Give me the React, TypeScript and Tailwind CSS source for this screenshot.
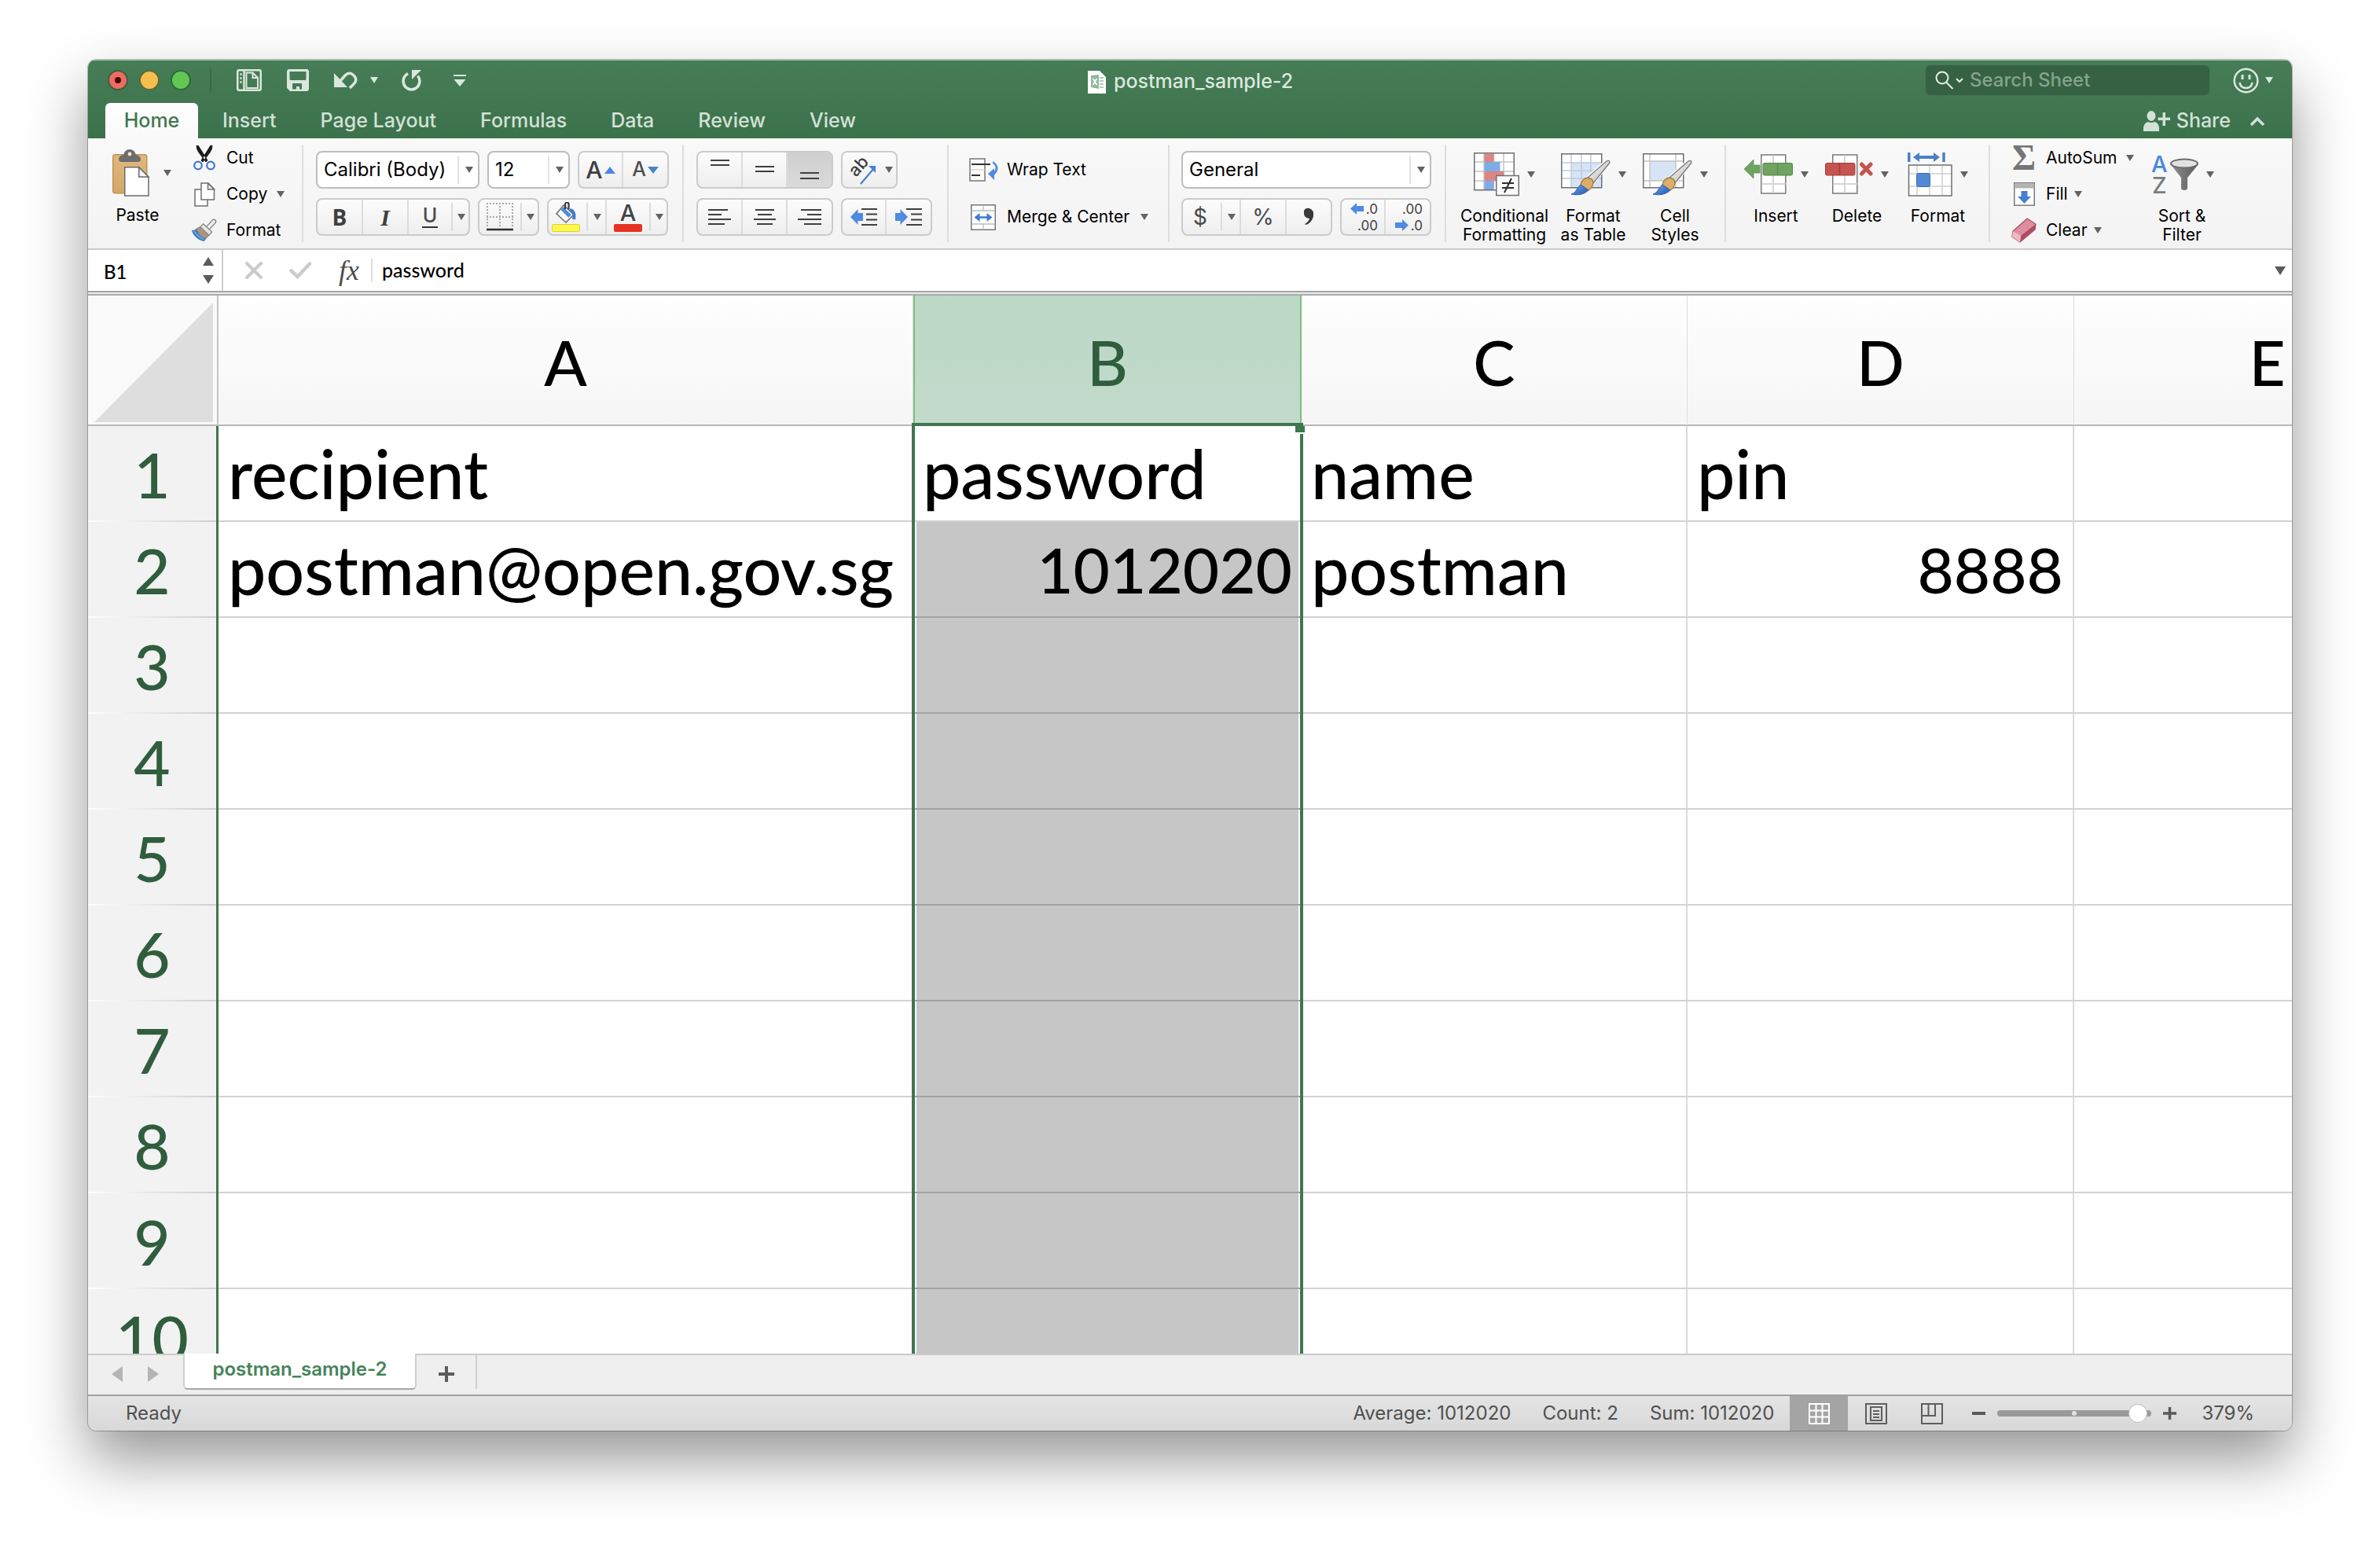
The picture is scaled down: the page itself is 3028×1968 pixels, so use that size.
import React, { ReactNode } from "react";

const BUTTON_FACE = "bg-linear-to-b from-[#fcfcfc] to-[#eeeeee] border-2 border-[#cbcbcb] rounded-lg";

function Caret({ className = "text-[#636363]" }: { className?: string }) {
  return (
    <svg viewBox="0 0 10 8" className={`h-2 w-2.5 shrink-0 ${className}`} aria-hidden="true">
      <path d="M0 0h10L5 8z" fill="currentColor" />
    </svg>
  );
}

function Separator() {
  return <div className="my-2 w-0.5 shrink-0 bg-[#dedede]" />;
}

function CaretButton({ label, className = "w-6" }: { label: string; className?: string }) {
  return (
    <button aria-label={label} className={`relative flex h-full shrink-0 items-center justify-center pl-1 ${className}`}>
      <span className="absolute inset-y-1 left-0 w-0.5 bg-[#dcdcdc]" />
      <Caret />
    </button>
  );
}

function ButtonSet({ children, className = "" }: { children: ReactNode; className?: string }) {
  return <div className={`flex h-12 shrink-0 overflow-hidden ${BUTTON_FACE} ${className}`}>{children}</div>;
}

function SetButton({ label, className, children }: { label: string; className: string; children: ReactNode }) {
  return (
    <button aria-label={label} className={`flex h-full shrink-0 items-center justify-center ${className}`}>
      {children}
    </button>
  );
}

function Picker({ label, value, className }: { label: string; value: string; className: string }) {
  return (
    <div className={`relative h-12 shrink-0 rounded-lg border-2 border-[#bdbdbd] bg-white ${className}`}>
      <select aria-label={label} className="h-full w-full appearance-none bg-transparent pl-2 text-2xl text-black">
        <option>{value}</option>
      </select>
      <span className="pointer-events-none absolute inset-y-1 right-6 w-0.5 bg-[#e3e3e3]" />
      <span className="pointer-events-none absolute inset-y-0 right-1.5 flex items-center">
        <Caret />
      </span>
    </div>
  );
}

function BigButton({ icon, label, className }: { icon: ReactNode; label: ReactNode; className: string }) {
  return (
    <button className={`flex shrink-0 flex-col items-center pt-4 ${className}`}>
      <span className="flex h-[60px] items-center gap-2.5">
        {icon}
        <Caret />
      </span>
      <span className="mt-[11px] text-center text-[21px] leading-6">{label}</span>
    </button>
  );
}

function RowButton({ icon, label, caret, gap = "gap-3" }: { icon: ReactNode; label: string; caret?: boolean; gap?: string }) {
  return (
    <button className={`flex h-[46px] items-center text-[21px] ${gap}`}>
      <span className="flex items-center gap-3">
        <span className="flex w-8 justify-center">{icon}</span>
        {label}
      </span>
      {caret && <Caret />}
    </button>
  );
}

/* ---------- icons ---------- */

function PasteIcon() {
  return (
    <svg width="47" height="60" viewBox="0 0 47 60" aria-hidden="true">
      <defs>
        <linearGradient id="board" x1="0" y1="0" x2="0" y2="1">
          <stop offset="0" stopColor="#e0b982" />
          <stop offset="1" stopColor="#d3a765" />
        </linearGradient>
      </defs>
      <rect x="0.75" y="6.75" width="43" height="49" rx="3" fill="url(#board)" stroke="#c2934f" strokeWidth="1.5" />
      <path d="M8 13q0-5 6-6 2-7 8-7t8 7q6 1 6 6 0 3-4 3H12q-4 0-4-3z" fill="#6d6d6d" />
      <circle cx="22" cy="6" r="2.4" fill="#f3e6d2" />
      <path d="M15.75 22.75h18L46 35v24H15.75z" fill="#fff" stroke="#6a6a6a" strokeWidth="1.5" />
      <path d="M33.75 22.75V35H46z" fill="#f4f4f4" stroke="#6a6a6a" strokeWidth="1.5" />
    </svg>
  );
}

function CutIcon() {
  return (
    <svg width="28" height="32" viewBox="0 0 28 32" aria-hidden="true">
      <path d="M4 0q0 5 3 9l9 12 2-2L6 0zM24 0q0 5-3 9l-9 12-2-2L22 0z" fill="#1c1c1c" stroke="#1c1c1c" strokeWidth="1" />
      <circle cx="6" cy="25.5" r="4.8" fill="none" stroke="#3f7bd0" strokeWidth="2.2" />
      <circle cx="22" cy="25.5" r="4.8" fill="none" stroke="#3f7bd0" strokeWidth="2.2" />
    </svg>
  );
}

function CopyIcon() {
  return (
    <svg width="27" height="31" viewBox="0 0 27 31" fill="#fff" stroke="#6f6f6f" strokeWidth="1.5" aria-hidden="true">
      <path d="M1 9h16v21H1z" />
      <path d="M9 1h9l7.500 7.500V22H9z" />
      <path d="M17.500 1v8H25.500z" fill="#f0f0f0" />
    </svg>
  );
}

function FormatPainterIcon() {
  return (
    <svg width="33" height="30" viewBox="0 0 33 30" aria-hidden="true">
      <path d="M22 11l7-7.500" stroke="#7d7d7d" strokeWidth="6.500" strokeLinecap="round" />
      <path d="M21 12l8-8.500" stroke="#ededed" strokeWidth="4" strokeLinecap="round" />
      <path d="M15 6.500l11.500 10.500-4 4.500L11 10.500z" fill="#e4e4e4" stroke="#7d7d7d" strokeWidth="1.200" />
      <path d="M11 10.500l11.500 11-4 4.500C12 24 8 18 6 13z" fill="#a8977f" stroke="#7f7362" strokeWidth="1" />
      <path d="M6 13c-2 2-4 2-6 2 1 6 8 13 16 14.500l3-3.500C12 25 8 19 6 13z" fill="#3e78c4" />
      <path d="M3 16c3 5 7 9 13 11" stroke="#7faee6" strokeWidth="1.500" fill="none" />
    </svg>
  );
}

function BordersIcon() {
  return (
    <svg width="34" height="36" viewBox="0 0 34 36" aria-hidden="true">
      <path d="M0 1h34M0 18h34M1 0v32M17 0v32M33 0v32" stroke="#aaaaaa" strokeWidth="2" strokeDasharray="2 2" />
      <path d="M0 34h34" stroke="#2e2e2e" strokeWidth="2.500" />
    </svg>
  );
}

function FillColorIcon() {
  return (
    <svg width="36" height="38" viewBox="0 0 36 38" aria-hidden="true">
      <path d="M15 4l13 12-10 10L6 15z" fill="#fdfdfd" stroke="#6b6b6b" strokeWidth="1.500" />
      <path d="M13 8l10 10" stroke="#4f8be0" strokeWidth="5" />
      <path d="M17 9V4q0-4 3-3.500 2 .5 1.500 4v5" fill="none" stroke="#3a3a3a" strokeWidth="2.200" />
      <path d="M23 10q7 2 5 12" fill="none" stroke="#3f7bd0" strokeWidth="4" />
      <rect x="0.500" y="28.500" width="35" height="9" rx="1" fill="#fdf74a" stroke="#d9d23c" />
    </svg>
  );
}

function FontColorIcon() {
  return (
    <span className="flex w-9 flex-col items-center">
      <span className="h-7 text-[29px] leading-7 font-medium text-[#454545]">A</span>
      <span className="h-2.5 w-9 rounded-xs bg-[#e83323]" />
    </span>
  );
}

function LinesIcon({ lines, width = 30, height = 28 }: { lines: [number, number, number][]; width?: number; height?: number }) {
  return (
    <svg width={width} height={height} viewBox={`0 0 ${width} ${height}`} aria-hidden="true">
      {lines.map(([x1, x2, y]) => (
        <path key={y} d={`M${x1} ${y}H${x2}`} stroke="#3f3f3f" strokeWidth="2.200" />
      ))}
    </svg>
  );
}

function IndentIcon({ direction }: { direction: "left" | "right" }) {
  return (
    <svg width="34" height="24" viewBox="0 0 34 24" aria-hidden="true">
      {direction === "left" ? (
        <path d="M0 12L9.500 2v5h6.500v10H9.500v5z" fill="#4f8be0" />
      ) : (
        <path d="M16 12L6.500 2v5H0v10h6.500v5z" fill="#4f8be0" />
      )}
      <path d="M14 2h20M20 8.500h14M20 15.500h14M14 22h20" stroke="#3f3f3f" strokeWidth="2.200" />
    </svg>
  );
}

function OrientationIcon() {
  return (
    <svg width="36" height="42" viewBox="0 0 36 42" className="overflow-visible" aria-hidden="true">
      <text x="0" y="0" transform="translate(9 31) rotate(-48)" fontFamily="Inter, sans-serif" fontSize="22" fontWeight="500" fill="#3f3f3f">
        ab
      </text>
      <path d="M15 39L32 19" stroke="#4580d6" strokeWidth="2.200" />
      <path d="M25 16h9v9z" fill="#4580d6" />
    </svg>
  );
}

function WrapIcon() {
  return (
    <svg width="40" height="32" viewBox="0 0 40 32" aria-hidden="true">
      <rect x="1" y="2" width="19" height="28" fill="#fbfbfb" stroke="#777" strokeWidth="1.500" />
      <path d="M1 16h19" stroke="#c8c8c8" strokeWidth="1.200" />
      <path d="M3 9h24M3 23h11" stroke="#333" strokeWidth="2.200" />
      <path d="M30 5q12 7 2 18v6l-8-8 8-7v4q4-6-2-10z" fill="#4f8be0" />
    </svg>
  );
}

function MergeIcon() {
  return (
    <svg width="32" height="33" viewBox="0 0 32 33" aria-hidden="true">
      <rect x="0.750" y="0.750" width="30.500" height="31.500" fill="#fdfdfd" stroke="#777" strokeWidth="1.500" />
      <path d="M1 8h30M1 25h30M16 1v7M16 25v7" stroke="#bdbdbd" strokeWidth="1.300" />
      <path d="M8 16.500h16" stroke="#3f7bd0" strokeWidth="2.500" />
      <path d="M4.500 16.500l7-5.500v11zM27.500 16.500l-7-5.500v11z" fill="#3f7bd0" />
    </svg>
  );
}

function DecimalIcon({ increase }: { increase?: boolean }) {
  return (
    <svg
      width="44"
      height="42"
      viewBox="0 0 44 42"
      className="overflow-visible"
      fontFamily="Inter, sans-serif"
      fontSize="17"
      fill="#3f3f3f"
      textAnchor="end"
      aria-hidden="true"
    >
      <text x="41" y="17">{increase ? ".0" : ".00"}</text>
      <text x="41" y="38">{increase ? ".00" : ".0"}</text>
      {increase ? (
        <path d="M6 10.500l8-7.500v4h9v7h-9v4z" fill="#4f8be0" />
      ) : (
        <path d="M23 31.500l-8-7.500v4H6v7h9v4z" fill="#4f8be0" />
      )}
    </svg>
  );
}

function ConditionalIcon() {
  return (
    <svg width="58" height="56" viewBox="0 0 58 56" aria-hidden="true">
      <rect x="0.750" y="0.750" width="50.500" height="47" fill="#fff" />
      <path d="M13 1v46M25.500 1v46M38 1v46M1 12h50M1 24h50M1 36h50" stroke="#c4c4c4" strokeWidth="1.500" />
      <path d="M13.500 1.500h12V12h-12zM13.500 24h25v12h-25z" fill="#dc8683" />
      <path d="M13.500 12h20v12h-20zM13.500 36h12v11.500h-12z" fill="#7fabe6" />
      <rect x="0.750" y="0.750" width="50.500" height="47" fill="none" stroke="#6f6f6f" strokeWidth="1.500" />
      <rect x="28.750" y="29.500" width="28.500" height="25" fill="#fbfbfb" stroke="#6f6f6f" strokeWidth="1.500" />
      <path d="M36 39h15M36 45h15M48 33l-9 18" stroke="#2f2f2f" strokeWidth="2" />
    </svg>
  );
}

function TableBrushIcon({ single }: { single?: boolean }) {
  return (
    <svg width="63" height="56" viewBox="0 0 63 56" aria-hidden="true">
      <defs>
        <linearGradient id="bristle" x1="0" y1="0" x2="1" y2="1">
          <stop offset="0" stopColor="#6ea6ee" />
          <stop offset="1" stopColor="#2456ad" />
        </linearGradient>
        <linearGradient id="handle" x1="0" y1="0" x2="1" y2="1">
          <stop offset="0" stopColor="#fdfdfd" />
          <stop offset="1" stopColor="#b4b4b4" />
        </linearGradient>
      </defs>
      <rect x="0.750" y="1.750" width="51" height="43" fill="#fff" />
      {single ? (
        <>
          <rect x="9" y="11" width="33" height="25" fill="#d6e4f6" />
          <path d="M9 2v42M42 2v42M1 11h50M1 36h50" stroke="#c4c4c4" strokeWidth="1.500" />
        </>
      ) : (
        <>
          <rect x="13" y="13" width="38" height="31" fill="#d6e4f6" />
          <path d="M13 2v42M26 2v42M38 2v42M1 13h50M1 23h50M1 33h50" stroke="#bccadd" strokeWidth="1.500" />
        </>
      )}
      <rect x="0.750" y="1.750" width="51" height="43" fill="none" stroke="#6f6f6f" strokeWidth="1.500" />
      <path d="M33 32L59 9q4-1 3 4L41 39l-4 6q-8 12-25 9 9-4 12-11z" fill="#f8f8f8" stroke="#f8f8f8" strokeWidth="3" />
      <path d="M34 32L58 11q4-2 4 2L41 39z" fill="url(#handle)" stroke="#777" strokeWidth="1.300" />
      <path d="M25 41q2-8 9-9 7 1 7 7-1 6-6 9z" fill="#dcae6c" stroke="#a5793a" strokeWidth="1.300" />
      <path d="M25 41q-3 2-5 6-2 5-7 6 14 3 22-5z" fill="url(#bristle)" stroke="#2d62b4" strokeWidth="1" />
    </svg>
  );
}

function InsertIcon() {
  return (
    <svg width="62" height="52" viewBox="0 0 62 52" aria-hidden="true">
      <path d="M21.750 1h31v49h-31z" fill="#fff" stroke="#7a7a7a" strokeWidth="1.500" />
      <path d="M37 1v49M22 38h31" stroke="#c9c9c9" strokeWidth="1.500" />
      <rect x="24" y="11.500" width="37.500" height="15.500" rx="2" fill="#6fa35f" stroke="#4f8a43" />
      <path d="M42.500 12v14" stroke="#5c9150" strokeWidth="1.500" />
      <path d="M0 19L12 7v7h8v10h-8v7z" fill="#6fa35f" stroke="#5c9150" strokeWidth="0.750" />
    </svg>
  );
}

function DeleteIcon() {
  return (
    <svg width="61" height="52" viewBox="0 0 61 52" aria-hidden="true">
      <path d="M9.750 1h31v49h-31z" fill="#fff" stroke="#7a7a7a" strokeWidth="1.500" />
      <path d="M25 1v49M10 38h31" stroke="#c9c9c9" strokeWidth="1.500" />
      <rect x="0.500" y="11.500" width="37.500" height="15.500" rx="2" fill="#c4544f" stroke="#ab3a36" />
      <path d="M18.500 12v14" stroke="#ab3a36" strokeWidth="1.500" />
      <path d="M46.500 13l11.500 12M58 13L46.500 25" stroke="#c4544f" strokeWidth="5" strokeLinecap="round" />
    </svg>
  );
}

function FormatCellsIcon() {
  return (
    <svg width="57" height="56" viewBox="0 0 57 56" aria-hidden="true">
      <path d="M1.750 0v12M46 0v12" stroke="#4a80c8" strokeWidth="3.500" />
      <path d="M13 6h22" stroke="#4a80c8" strokeWidth="4" />
      <path d="M7 6l8-6v12zM41 6l-8-6v12z" fill="#4a80c8" />
      <rect x="1.500" y="16" width="54.500" height="39" fill="#fff" />
      <path d="M12 16v39M28 16v39M44 16v39M1 27h55M1 43h55" stroke="#cfcfcf" strokeWidth="1.500" />
      <rect x="1.500" y="16" width="54.500" height="39" fill="none" stroke="#6f6f6f" strokeWidth="1.500" />
      <rect x="11.500" y="26.500" width="17" height="17" rx="2" fill="#5289d0" stroke="#3b6fb5" />
    </svg>
  );
}

function FillDownIcon() {
  return (
    <svg width="27" height="30" viewBox="0 0 27 30" aria-hidden="true">
      <rect x="0.750" y="0.750" width="25.500" height="28.500" fill="#fff" stroke="#7a7a7a" strokeWidth="1.500" />
      <path d="M1.500 1.500h24v6h-24z" fill="#b4b4b4" />
      <path d="M9.500 11h8v7h4.500l-8.500 9-8.500-9h4.500z" fill="#4580cf" />
    </svg>
  );
}

function EraserIcon() {
  return (
    <svg width="32" height="32" viewBox="0 0 32 32" aria-hidden="true">
      <path d="M20 1l11 7-1 7-19 16L1 24l1-7z" fill="#dd8fa0" stroke="#a84f65" strokeWidth="1.300" />
      <path d="M31 8L12 23l-1 8 19-16z" fill="#b04d66" />
      <path d="M2 17l10 6-1 8L1 24z" fill="#efb9c5" />
    </svg>
  );
}

function SortFilterIcon() {
  return (
    <svg width="61" height="54" viewBox="0 0 61 54" className="overflow-visible" aria-hidden="true">
      <defs>
        <linearGradient id="funnel" x1="0" y1="0" x2="1" y2="0">
          <stop offset="0" stopColor="#8e8e8e" />
          <stop offset="1" stopColor="#5c5c5c" />
        </linearGradient>
      </defs>
      <g fontFamily="Inter, sans-serif" fontSize="29" fontWeight="500">
        <text x="1" y="24" fill="#4a87e0">A</text>
        <text x="2" y="51" fill="#7b7b7b">Z</text>
      </g>
      <path d="M25.500 14L39 31v13q0 3 4 3t4-3V31l14-17z" fill="url(#funnel)" />
      <ellipse cx="43" cy="13" rx="17" ry="5.500" fill="#e2e2e2" stroke="#6b6b6b" strokeWidth="2" />
    </svg>
  );
}

/* ---------- title bar ---------- */

function TitleBar() {
  return (
    <header className="flex h-[54px] shrink-0 items-center pr-6 pl-[25px] text-[#dbe7de]">
      <div className="flex flex-1 items-center pb-1">
        <div className="flex gap-3.5">
          <button aria-label="Close" className="flex size-[26px] items-center justify-center rounded-full border-2 border-[#3d5f3e] bg-[#ed6b60]">
            <span className="size-2 rounded-full bg-[#460804]" />
          </button>
          <button aria-label="Minimise" className="size-[26px] rounded-full border-2 border-[#5b6b35] bg-[#f5bf4f]" />
          <button aria-label="Zoom window" className="size-[26px] rounded-full border-2 border-[#2f6a35] bg-[#62c655]" />
        </div>
        <div className="ml-6 h-8 w-0.5 bg-[#3a6949]" />
        <button aria-label="File gallery" className="ml-8">
          <svg width="32" height="28" viewBox="0 0 32 28" fill="none" stroke="currentColor" aria-hidden="true">
            <rect x="1.250" y="1.250" width="29.500" height="25.500" rx="2" strokeWidth="2.500" />
            <path d="M9.500 1v26" strokeWidth="2.500" />
            <path d="M5.500 5v3M5.500 10v3M5.500 15v3" strokeWidth="2" />
            <path d="M12.500 4.500h8l6.500 6.500v13H12.500z" strokeWidth="2" />
            <path d="M20.500 4v7h7" strokeWidth="2" />
          </svg>
        </button>
        <button aria-label="Save" className="ml-8">
          <svg width="28" height="28" viewBox="0 0 28 28" aria-hidden="true">
            <path
              fillRule="evenodd"
              fill="currentColor"
              d="M2 0h24l2 2v24l-2 2H4l-4-4V2zM3.500 3v9.500q0 1.500 1.500 1.500h18q1.500 0 1.500-1.500V3zM7 18v7.500h5V22h4v3.500h3V18z"
            />
          </svg>
        </button>
        <button aria-label="Undo" className="ml-8">
          <svg width="30" height="24" viewBox="0 0 30 24" aria-hidden="true">
            <path d="M0 3v18h17z" fill="currentColor" />
            <path d="M7 14L14 6q5-5 10-1 7 6 1 12l-5 5" fill="none" stroke="currentColor" strokeWidth="3.500" />
          </svg>
        </button>
        <button aria-label="Undo history" className="ml-4">
          <Caret className="text-[#dbe7de]" />
        </button>
        <button aria-label="Redo" className="ml-[30px]">
          <svg width="26" height="28" viewBox="0 0 26 28" aria-hidden="true">
            <path d="M8 5.500Q2 9 2 15.500 3 25 12.500 26 22 25 23 15.500q0-4-2.500-7" fill="none" stroke="currentColor" strokeWidth="3.500" />
            <path d="M13 1h12L13 13z" fill="currentColor" />
          </svg>
        </button>
        <button aria-label="Customise toolbar" className="ml-10">
          <svg width="16" height="16" viewBox="0 0 16 16" fill="currentColor" aria-hidden="true">
            <path d="M0 1h16v2H0zM0.500 7h15L8 16z" />
          </svg>
        </button>
      </div>
      <h1 className="flex items-center gap-2.5 text-[25px] font-medium">
        <svg width="23" height="29" viewBox="0 0 23 29" aria-hidden="true">
          <path d="M0 0h15l8 8v21H0z" fill="#fff" />
          <path d="M4 6l10-1v18L4 21z" fill="#8db89b" />
          <path d="M6.500 10l5 8M11.500 10l-5 8" stroke="#fff" strokeWidth="1.800" />
          <path d="M15 9h5M15 13h5M15 17h5M15 21h5" stroke="#9cb9a5" strokeWidth="1.500" />
        </svg>
        postman_sample-2
      </h1>
      <div className="flex flex-1 items-center justify-end pb-1">
        <label className="flex h-[38px] w-[361px] items-center rounded-md bg-[#366142] pl-3">
          <svg width="36" height="24" viewBox="0 0 36 24" className="shrink-0" fill="none" stroke="#e6efe8" strokeWidth="2" aria-hidden="true">
            <circle cx="9" cy="9" r="7.500" />
            <path d="M14.500 15l8 8M27 10l4 4 4-4" />
          </svg>
          <input
            type="search"
            aria-label="Search Sheet"
            placeholder="Search Sheet"
            className="ml-2 w-full min-w-0 bg-transparent text-2xl font-medium placeholder:text-[#84a38d]"
          />
        </label>
        <button aria-label="Feedback" className="ml-[30px] flex items-center gap-2">
          <svg width="33" height="33" viewBox="0 0 33 33" fill="none" stroke="currentColor" aria-hidden="true">
            <circle cx="16.500" cy="16.500" r="14.800" strokeWidth="2.500" />
            <path d="M12 9v6M21 9v6" strokeWidth="3" />
            <path d="M8.500 19q1 7 8 7t8-7" strokeWidth="2.500" />
          </svg>
          <Caret className="text-[#dbe7de]" />
        </button>
      </div>
    </header>
  );
}

const TABS = ["Insert", "Page Layout", "Formulas", "Data", "Review", "View"];

function TabBar() {
  return (
    <nav className="flex h-[45px] shrink-0 items-stretch pr-[34px] pl-[22px] text-[25px] font-medium text-[#d3e1d7]">
      <button className="w-[118px] rounded-t-md bg-linear-to-b from-white to-[#f9f9f9] text-[#3f764f]">Home</button>
      <div className="ml-[31px] flex flex-1 gap-14">
        {TABS.map((tab) => (
          <button key={tab}>{tab}</button>
        ))}
      </div>
      <button className="flex items-center gap-2">
        <svg width="34" height="26" viewBox="0 0 34 26" fill="currentColor" aria-hidden="true">
          <ellipse cx="10" cy="6.500" rx="5.500" ry="6.500" />
          <path d="M0 26v-5q1-6 6-7 4 2 8 0 5 1 6 7v5z" />
          <path d="M24.500 2h3.500v6.500h6V12h-6v7h-3.500v-7h-6V8.500h6z" />
        </svg>
        Share
      </button>
      <button aria-label="Collapse ribbon" className="ml-6">
        <svg width="20" height="14" viewBox="0 0 20 14" fill="none" stroke="currentColor" strokeWidth="3.500" aria-hidden="true">
          <path d="M2 12l8-8 8 8" />
        </svg>
      </button>
    </nav>
  );
}

/* ---------- ribbon ---------- */

const V_ALIGN: { label: string; lines: [number, number, number][] }[] = [
  { label: "Align top", lines: [[3, 27, 2], [3, 27, 8]] },
  { label: "Align middle", lines: [[3, 27, 10], [3, 27, 16]] },
  { label: "Align bottom", lines: [[3, 27, 18], [3, 27, 25]] },
];

const H_ALIGN: { label: string; lines: [number, number, number][] }[] = [
  { label: "Align left", lines: [[0, 25, 5], [0, 17, 11], [0, 29, 17], [0, 21, 23]] },
  { label: "Centre", lines: [[3, 27, 5], [6, 24, 11], [1, 29, 17], [5, 25, 23]] },
  { label: "Align right", lines: [[4, 30, 5], [12, 30, 11], [0, 30, 17], [8, 30, 23]] },
];

function Ribbon() {
  return (
    <section
      aria-label="Home ribbon"
      className="flex h-[142px] shrink-0 overflow-hidden border-b-2 border-[#c9c9c9] bg-linear-to-b from-[#f9f9f9] to-[#f3f3f3] text-black"
    >
      <div className="flex w-[272px] shrink-0">
        <button className="flex w-[126px] shrink-0 flex-col items-center pt-3.5 pl-2.5">
          <span className="flex h-[60px] items-center gap-[18px]">
            <PasteIcon />
            <Caret />
          </span>
          <span className="mt-3 mr-2.5 text-[21px] leading-6">Paste</span>
        </button>
        <div className="flex flex-col pt-0.5 pl-1.5">
          <RowButton icon={<CutIcon />} label="Cut" />
          <RowButton icon={<CopyIcon />} label="Copy" caret />
          <RowButton icon={<FormatPainterIcon />} label="Format" />
        </div>
      </div>
      <Separator />

      <div className="flex w-[482px] shrink-0 flex-col justify-center gap-3 pl-4">
        <div className="flex gap-2.5">
          <Picker label="Font" value="Calibri (Body)" className="w-[208px]" />
          <Picker label="Font size" value="12" className="w-[105px]" />
          <ButtonSet>
            <SetButton label="Increase font size" className="w-14 gap-0.5 border-r-2 border-[#dcdcdc]">
              <span className="text-[30px] font-medium text-[#404040]">A</span>
              <svg width="14" height="9" viewBox="0 0 14 9" aria-hidden="true">
                <path d="M7 0l7 9H0z" fill="#4a87e0" />
              </svg>
            </SetButton>
            <SetButton label="Decrease font size" className="w-14 gap-0.5">
              <span className="text-[25px] font-medium text-[#505050]">A</span>
              <svg width="14" height="9" viewBox="0 0 14 9" aria-hidden="true">
                <path d="M0 0h14L7 9z" fill="#4a87c8" />
              </svg>
            </SetButton>
          </ButtonSet>
        </div>
        <div className="flex gap-2.5">
          <ButtonSet>
            <SetButton label="Bold" className="w-[58px] border-r-2 border-[#dcdcdc] font-['Open_Sans'] text-[28px] font-bold text-[#3f3f3f]">B</SetButton>
            <SetButton label="Italic" className="w-[58px] border-r-2 border-[#dcdcdc] font-['Liberation_Serif'] text-[30px] font-bold text-[#3f3f3f] italic">I</SetButton>
            <SetButton label="Underline" className="w-[54px]">
              <span className="flex h-7 w-5 flex-col items-center border-b-2 border-[#333] text-[25px] leading-6 font-medium text-[#4a4a4a]">U</span>
            </SetButton>
            <CaretButton label="Underline styles" className="w-[22px]" />
          </ButtonSet>
          <ButtonSet>
            <SetButton label="Borders" className="w-[52px]"><BordersIcon /></SetButton>
            <CaretButton label="Border styles" className="w-[22px]" />
          </ButtonSet>
          <ButtonSet>
            <SetButton label="Fill colour" className="w-12 pr-2 pl-1"><FillColorIcon /></SetButton>
            <CaretButton label="More fill colours" className="w-[26px] border-r-2 border-[#dcdcdc]" />
            <SetButton label="Font colour" className="w-[54px]"><FontColorIcon /></SetButton>
            <CaretButton label="More font colours" className="w-[22px]" />
          </ButtonSet>
        </div>
      </div>
      <Separator />

      <div className="flex w-[335px] shrink-0 flex-col justify-center gap-3 pl-4">
        <div className="flex gap-2.5">
          <ButtonSet className="w-[174px]">
            {V_ALIGN.map(({ label, lines }, i) => (
              <SetButton
                key={label}
                label={label}
                className={i === 2 ? "w-[56px] bg-linear-to-b from-[#cfcfcf] to-[#dadada]" : "w-[57px] border-r-2 border-[#dcdcdc]"}
              >
                <LinesIcon lines={lines} />
              </SetButton>
            ))}
          </ButtonSet>
          <ButtonSet className="w-[72px]">
            <SetButton label="Orientation" className="w-[68px] gap-2.5 pl-1"><OrientationIcon /><Caret /></SetButton>
          </ButtonSet>
        </div>
        <div className="flex gap-2.5">
          <ButtonSet className="w-[174px]">
            {H_ALIGN.map(({ label, lines }, i) => (
              <SetButton key={label} label={label} className={i === 2 ? "w-[56px]" : "w-[57px] border-r-2 border-[#dcdcdc]"}>
                <LinesIcon lines={lines} />
              </SetButton>
            ))}
          </ButtonSet>
          <ButtonSet>
            <SetButton label="Decrease indent" className="w-14 border-r-2 border-[#dcdcdc]"><IndentIcon direction="left" /></SetButton>
            <SetButton label="Increase indent" className="w-14"><IndentIcon direction="right" /></SetButton>
          </ButtonSet>
        </div>
      </div>
      <Separator />

      <div className="flex w-[279px] shrink-0 flex-col justify-center gap-4 pl-[26px] text-[21px]">
        <button className="flex h-11 items-center gap-2"><WrapIcon />Wrap Text</button>
        <button className="flex h-11 items-center gap-3.5 pl-0.5">
          <MergeIcon />
          <span>Merge &amp; Center</span>
          <Caret />
        </button>
      </div>
      <Separator />

      <div className="flex w-[350px] shrink-0 flex-col justify-center gap-3 pl-[15px]">
        <Picker label="Number format" value="General" className="w-[318px]" />
        <div className="flex gap-2.5">
          <ButtonSet className="w-[192px] text-[#4a4a4a]">
            <SetButton label="Currency" className="w-12 pr-1 text-[28px]">$</SetButton>
            <CaretButton label="More currencies" className="w-[26px] border-r-2 border-[#dcdcdc]" />
            <SetButton label="Percent" className="w-[58px] border-r-2 border-[#dcdcdc] text-[28px]">%</SetButton>
            <SetButton label="Comma style" className="w-14">
              <svg width="16" height="26" viewBox="0 0 16 26" aria-hidden="true">
                <path d="M2 5q2-4 7-3 6 2 5 10-2 9-10 11l-1-1q5-3 6-7-7-1-7-6z" fill="#3a3a3a" />
              </svg>
            </SetButton>
          </ButtonSet>
          <ButtonSet>
            <SetButton label="Increase decimal" className="w-14 border-r-2 border-[#dcdcdc]"><DecimalIcon increase /></SetButton>
            <SetButton label="Decrease decimal" className="w-14"><DecimalIcon /></SetButton>
          </ButtonSet>
        </div>
      </div>
      <Separator />

      <div className="flex w-[354px] shrink-0 items-start pl-4">
        <BigButton icon={<ConditionalIcon />} label={<>Conditional<br />Formatting</>} className="w-[116px]" />
        <BigButton icon={<TableBrushIcon />} label={<>Format<br />as Table</>} className="w-[110px]" />
        <BigButton icon={<TableBrushIcon single />} label={<>Cell<br />Styles</>} className="w-[98px]" />
      </div>
      <Separator />

      <div className="flex w-[334px] shrink-0 items-start pl-3">
        <BigButton icon={<InsertIcon />} label="Insert" className="w-[103px]" />
        <BigButton icon={<DeleteIcon />} label="Delete" className="w-[103px]" />
        <BigButton icon={<FormatCellsIcon />} label="Format" className="w-[103px]" />
      </div>
      <Separator />

      <div className="flex flex-1 items-start pl-[27px]">
        <div className="flex w-[162px] shrink-0 flex-col pt-0.5">
          <RowButton icon={<span className="font-['Liberation_Serif'] text-[46px] leading-8 font-bold text-[#757575]">Σ</span>} label="AutoSum" caret />
          <RowButton icon={<FillDownIcon />} label="Fill" caret gap="gap-2" />
          <RowButton icon={<EraserIcon />} label="Clear" caret gap="gap-2" />
        </div>
        <BigButton icon={<SortFilterIcon />} label={<>Sort &amp;<br />Filter</>} className="w-[110px]" />
      </div>
    </section>
  );
}

function FormulaBar() {
  return (
    <div className="flex h-[58px] shrink-0 flex-col bg-white">
      <div className="flex flex-1 items-center pr-2">
        <div className="flex h-full w-[172px] shrink-0 items-center justify-between border-r-2 border-[#cfcfcf] pr-2.5 pl-5">
          <input aria-label="Name box" defaultValue="B1" className="w-24 bg-transparent pt-1 font-['Lato'] text-2xl font-medium text-black" />
          <svg width="14" height="34" viewBox="0 0 14 34" fill="#5a5a5a" aria-hidden="true">
            <path d="M7 0l7 11H0zM0 23h14L7 34z" />
          </svg>
        </div>
        <button aria-label="Cancel" className="ml-7">
          <svg width="22" height="22" viewBox="0 0 22 22" stroke="#cbcbcb" strokeWidth="4" strokeLinecap="round" aria-hidden="true">
            <path d="M2 2l18 18M20 2L2 20" />
          </svg>
        </button>
        <button aria-label="Enter" className="ml-[34px]">
          <svg width="28" height="22" viewBox="0 0 28 22" fill="none" stroke="#cbcbcb" strokeWidth="4.500" strokeLinecap="round" aria-hidden="true">
            <path d="M2.500 11.500l8 7.500L26 2.500" />
          </svg>
        </button>
        <button aria-label="Insert function" className="ml-8 w-8 font-['Liberation_Serif'] text-4xl leading-9 text-[#4c4c4c] italic">
          fx
        </button>
        <div className="mx-3 h-[30px] w-0.5 bg-[#dddddd]" />
        <input aria-label="Formula" defaultValue="password" className="flex-1 bg-transparent font-['Lato'] text-[25px] font-medium text-black" />
        <button aria-label="Expand formula bar">
          <svg width="14" height="11" viewBox="0 0 14 11" fill="#5a5a5a" aria-hidden="true">
            <path d="M0 0h14L7 11z" />
          </svg>
        </button>
      </div>
      <div className="h-1.5 shrink-0 border-y-2 border-t-[#a4a4a4] border-b-[#a9a9a9] bg-[#ececec]" />
    </div>
  );
}

/* ---------- sheet ---------- */

const COLUMNS = ["A", "B", "C", "D", "E"];
const ROWS: string[][] = [
  ["recipient", "password", "name", "pin", ""],
  ["postman@open.gov.sg", "1012020", "postman", "8888", ""],
  ...Array.from({ length: 8 }, () => ["", "", "", "", ""]),
];

function isNumber(text: string) {
  return /^\d+$/.test(text);
}

function Sheet() {
  return (
    <main className="min-h-0 flex-1 overflow-hidden bg-white">
      <table className="w-[3019px] table-fixed border-separate border-spacing-0 font-['Lato'] text-[80px] leading-[80px] font-medium text-black">
        <colgroup>
          <col className="w-[166px]" />
          <col className="w-[884px]" />
          <col className="w-[494px]" />
          <col className="w-[491px]" />
          <col className="w-[492px]" />
          <col className="w-[492px]" />
        </colgroup>
        <thead>
          <tr className="h-[166px]">
            <th className="border-r-2 border-b-2 border-r-[#c4c4c4] border-b-[#b8b8b8] bg-[#fafafa] p-0">
              <svg width="164" height="162" viewBox="0 0 164 162" className="block" aria-hidden="true">
                <path d="M159 8v152H8z" fill="#dedede" />
              </svg>
            </th>
            {COLUMNS.map((name) =>
              name === "B" ? (
                <th key={name} className="relative border-x-2 border-b-2 border-[#7fbf7c] bg-linear-to-b from-[#bcd8c6] to-[#c2dacb] px-0 pt-1 pb-0 font-medium text-[#2f5d3d]">
                  {name}
                  <span className="pointer-events-none absolute top-full -right-1 -left-1 -mt-0.5 h-[1300px] border-4 border-[#3f7650]" />
                  <span className="absolute top-full -right-1.5 mt-0.5 h-2.5 w-3 border-b-2 border-white bg-[#3f7650]" />
                </th>
              ) : (
                <th key={name} className="border-r border-b-2 border-r-[#dcdcdc] border-b-[#b8b8b8] bg-linear-to-b from-[#fefefe] to-[#f6f6f6] px-0 pt-1 pb-0 font-medium">
                  {name}
                </th>
              ),
            )}
          </tr>
        </thead>
        <tbody>
          {ROWS.map((cells, r) => (
            <tr key={r} className="h-[122px]">
              <th
                scope="row"
                className="border-r-[3px] border-[#3f7650] bg-[#f2f2f2] bg-[linear-gradient(to_right,#ffffff,#f0f0f0_30%,#cfcfcf)] bg-[size:100%_2px] bg-bottom bg-no-repeat p-0 font-medium text-[#2f5d3d]"
              >
                {r + 1}
              </th>
              {cells.map((text, c) => {
                const selected = c === 1 && r > 0;
                return (
                  <td
                    key={c}
                    className={`border-b-2 px-3 py-0 whitespace-nowrap ${isNumber(text) ? "text-right" : "text-left text-[86px]"} ${
                      selected ? "border-b-[#a3a3a3] bg-[#c6c6c6] shadow-[inset_4px_0_white,inset_-4px_0_white]" : "border-b-[#d2d2d2]"
                    } ${c > 1 ? "border-r-2 border-r-[#dadada]" : ""}`}
                  >
                    {text}
                  </td>
                );
              })}
            </tr>
          ))}
        </tbody>
      </table>
    </main>
  );
}

function SheetTabs() {
  return (
    <div className="flex h-[52px] shrink-0 items-start bg-[#efefef]">
      <div className="flex h-full w-[121px] shrink-0 items-center gap-8 border-t-2 border-[#cbcbcb] pb-0.5 pl-[30px]">
        <button aria-label="Previous sheet">
          <svg width="14" height="20" viewBox="0 0 14 20" fill="#b4b4b4" aria-hidden="true"><path d="M14 0v20L0 10z" /></svg>
        </button>
        <button aria-label="Next sheet">
          <svg width="14" height="20" viewBox="0 0 14 20" fill="#b4b4b4" aria-hidden="true"><path d="M0 0v20l14-10z" /></svg>
        </button>
      </div>
      <button className="h-[46px] w-[297px] shrink-0 rounded-b-md border-x-2 border-b-2 border-x-[#cfcfcf] border-b-[#a6a6a6] bg-white pb-1 text-2xl font-semibold text-[#45845a]">
        postman_sample-2
      </button>
      <div className="flex h-full flex-1 items-start border-t-2 border-[#cbcbcb]">
        <button aria-label="Add sheet" className="flex h-[43px] w-[77px] items-center justify-center border-r-2 border-[#cfcfcf] pt-1">
          <svg width="20" height="20" viewBox="0 0 20 20" stroke="#5c5c5c" strokeWidth="4" aria-hidden="true"><path d="M10 0v20M0 10h20" /></svg>
        </button>
      </div>
    </div>
  );
}

function StatusBar() {
  return (
    <footer className="flex h-[46px] shrink-0 items-center border-t-2 border-[#a0a0a0] bg-linear-to-b from-[#e4e4e4] to-[#d8d8d8] pr-12 pl-12 text-2xl text-[#505050]">
      <span className="flex-1">Ready</span>
      <span>Average: 1012020</span>
      <span className="ml-10">Count: 2</span>
      <span className="ml-10">Sum: 1012020</span>
      <button aria-label="Normal view" className="ml-5 flex h-full w-[74px] items-center justify-center bg-[#a4a4a4]">
        <svg width="27" height="27" viewBox="0 0 27 27" fill="none" stroke="#fff" strokeWidth="2" aria-hidden="true">
          <path d="M1 1h25v25H1zM9.500 1v25M17.500 1v25M1 9.500h25M1 17.500h25" />
        </svg>
      </button>
      <button aria-label="Page layout view" className="flex h-full w-[71px] items-center justify-center">
        <svg width="28" height="27" viewBox="0 0 28 27" fill="none" stroke="#5e5e5e" strokeWidth="2" aria-hidden="true">
          <path d="M1 1h26v25H1zM7 5h14v17H7zM10 10h8M10 14h8M10 18h8" />
        </svg>
      </button>
      <button aria-label="Page break view" className="flex h-full w-[71px] items-center justify-center">
        <svg width="28" height="27" viewBox="0 0 28 27" fill="none" stroke="#5e5e5e" strokeWidth="2" aria-hidden="true">
          <path d="M1 1h26v25H1zM1 16h17M18 1v16M9.500 1v15" />
        </svg>
      </button>
      <button aria-label="Zoom out" className="ml-4">
        <svg width="17" height="4" viewBox="0 0 17 4" aria-hidden="true"><path d="M0 2h17" stroke="#5a5a5a" strokeWidth="4" /></svg>
      </button>
      <div className="relative mx-[15px] flex w-[196px] items-center">
        <span className="absolute inset-x-0 h-2 rounded-full bg-[#9a9a9a]" />
        <span className="absolute left-1/2 -ml-[3px] size-1.5 rounded-full bg-[#e2e2e2]" />
        <input
          type="range"
          aria-label="Zoom"
          min={0}
          max={100}
          defaultValue={97}
          className="relative h-6 w-full appearance-none bg-transparent [&::-webkit-slider-thumb]:size-6 [&::-webkit-slider-thumb]:appearance-none [&::-webkit-slider-thumb]:rounded-full [&::-webkit-slider-thumb]:border [&::-webkit-slider-thumb]:border-[#bdbdbd] [&::-webkit-slider-thumb]:bg-white"
        />
      </div>
      <button aria-label="Zoom in">
        <svg width="17" height="16" viewBox="0 0 17 16" stroke="#5a5a5a" strokeWidth="3.500" aria-hidden="true"><path d="M8.500 0v16M0 8h17" /></svg>
      </button>
      <span className="ml-8">379%</span>
    </footer>
  );
}

export default function App() {
  return (
    <div className="flex h-screen flex-col bg-white px-28 pt-[76px] pb-[148px] font-['Inter',sans-serif]">
      <div className="flex min-h-0 flex-1 flex-col overflow-hidden rounded-t-[10px] rounded-b-[11px] shadow-[0_0_0_1px_rgba(0,0,0,0.25),0_36px_76px_rgba(0,0,0,0.42)]">
        <div className="flex shrink-0 flex-col border-t border-[#a5c3ae] bg-linear-to-b from-[#467d57] to-[#3c724b]">
          <TitleBar />
          <TabBar />
        </div>
        <Ribbon />
        <FormulaBar />
        <Sheet />
        <SheetTabs />
        <StatusBar />
      </div>
    </div>
  );
}
